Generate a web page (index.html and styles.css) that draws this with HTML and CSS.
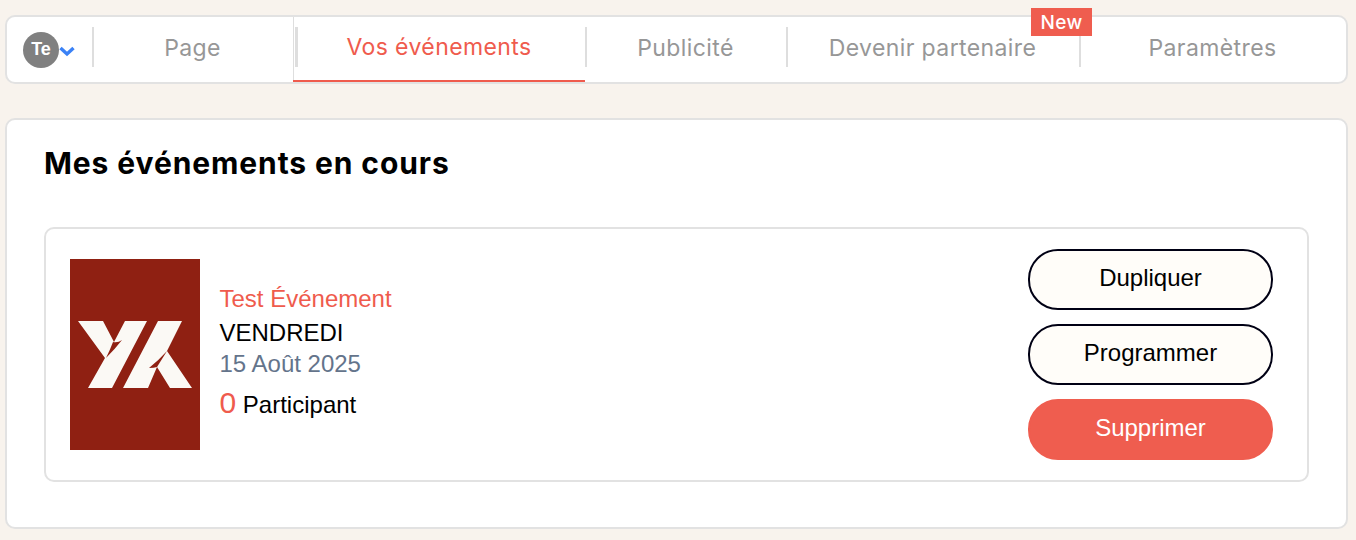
FILE: index.html
```html
<!DOCTYPE html>
<html lang="fr">
  <head>
    <meta charset="UTF-8" />
    <meta name="viewport" content="width=device-width, initial-scale=1.0" />
    <title>Vos événements</title>
    <link rel="stylesheet" href="styles.css">
  </head>
  <body>
    <nav class="tabs">
      <div class="account">
        <span class="avatar">Te</span>
        <svg class="chevron" width="18" height="12" viewBox="0 0 18 12">
          <path d="M2.5 3 L9 9 L15.5 3" fill="none" stroke="#3b82f6" stroke-width="3.4"/>
        </svg>
      </div>
      <a class="tab tab-page">Page</a>
      <a class="tab tab-events active">Vos événements</a>
      <a class="tab tab-pub">Publicité</a>
      <a class="tab tab-partner">Devenir partenaire<span class="badge">New</span></a>
      <a class="tab tab-settings">Paramètres</a>
    </nav>

    <section class="panel">
      <h1>Mes événements en cours</h1>
      <div class="event">
        <svg class="cover" width="130" height="191" viewBox="0 0 130 191">
          <rect width="130" height="191" fill="#8f2012"/>
          <path d="M8 62 H33 L44 83 L55 62 H77 L42 129 H18 L35 99 Z" fill="#fbf9f5"/>
          <path d="M43 83 Q48 84 52 81 Q45 90 36 99 Q40 91 43 83 Z" fill="#8f2012"/>
          <path d="M88 62 H112 L97 92 L122 129 H100 L87 108 L78 129 H53 Z" fill="#fbf9f5"/>
          <path d="M97 92 Q88 102 79 109 Q84 109 87 108 Z" fill="#8f2012"/>
        </svg>
        <div class="event-info">
          <div class="event-name">Test Événement</div>
          <div class="event-day">VENDREDI</div>
          <div class="event-date">15 Août 2025</div>
          <div class="event-count"><span class="count">0</span> Participant</div>
        </div>
        <div class="actions">
          <button class="btn" type="button">Dupliquer</button>
          <button class="btn" type="button">Programmer</button>
          <button class="btn btn-danger" type="button">Supprimer</button>
        </div>
      </div>
    </section>
  </body>
</html>
```

FILE: styles.css
```css
body {
  font-family: "Liberation Sans", Arial, sans-serif;
  margin: 0;
  padding: 15px 8px 10px 5px;
  background: #f8f3ed;
  color: #000;
}

.tabs {
  display: flex;
  height: 69px;
  box-sizing: border-box;
  background: #fff;
  border: 2px solid #e2e2e2;
  border-radius: 10px;
}

.account {
  display: flex;
  align-items: center;
  width: 85px;
  padding-left: 16px;
  box-sizing: border-box;
}

.avatar {
  width: 36px;
  height: 36px;
  border-radius: 50%;
  background: #808080;
  color: #fff;
  font-size: 18px;
  font-weight: bold;
  display: flex;
  align-items: center;
  justify-content: center;
  flex-shrink: 0;
}

.chevron {
  margin-top: 2px;
  margin-left: -1px;
}

.tab {
  position: relative;
  display: flex;
  align-items: center;
  justify-content: center;
  padding-bottom: 3px;
  color: #979797;
  font-family: Inter, sans-serif;
  font-size: 23px;
  letter-spacing: 0.4px;
  box-sizing: border-box;
}

/* short divider on the left of each tab */
.tab::before {
  content: "";
  position: absolute;
  left: 0;
  top: 10px;
  width: 2px;
  height: 40px;
  background: #dedede;
}

.tab-page { width: 201px; }
.tab-events { width: 292px; }
.tab-pub { width: 201px; }
.tab-partner { width: 293px; }
.tab-settings { flex: 1; }

.tab-events::before {
  left: 2px;
  width: 3px;
}

.tab-events::after {
  content: "";
  position: absolute;
  left: 0;
  top: 0;
  bottom: 0;
  width: 1px;
  background: #dedede;
}

.active {
  color: #ef5b4d;
  border-bottom: 2px solid #ef5b4d;
  padding-bottom: 4px;
}

.badge {
  position: absolute;
  z-index: 1;
  top: -9px;
  right: -13px;
  width: 61px;
  height: 28px;
  background: #ef5d4f;
  color: #fff;
  font-size: 19px;
  letter-spacing: 0.3px;
  font-weight: 500;
  display: flex;
  align-items: center;
  justify-content: center;
}

.panel {
  margin-top: 34px;
  height: 411px;
  box-sizing: border-box;
  padding: 24px 37px 0;
  background: #fff;
  border: 2px solid #e2e2e2;
  border-radius: 10px;
}

h1 {
  margin: 0 0 45px;
  font-family: Inter, sans-serif;
  font-size: 30px;
  font-weight: 700;
  letter-spacing: 0.9px;
  line-height: 38px;
}

.event {
  display: flex;
  align-items: center;
  height: 255px;
  box-sizing: border-box;
  padding: 0 34px 0 24px;
  border: 2px solid #e2e2e2;
  border-radius: 10px;
}

.cover {
  flex-shrink: 0;
}

.event-info {
  flex: 1;
  margin-left: 19.5px;
  padding-top: 2px;
  font-size: 24px;
}

.event-name {
  color: #ef5b4d;
  line-height: 34px;
}

.event-day {
  line-height: 33px;
}

.event-date {
  color: #64748b;
  line-height: 30px;
}

.event-count {
  line-height: 48px;
}

.count {
  color: #ef5b4d;
  font-size: 30px;
}

.actions {
  display: flex;
  flex-direction: column;
  gap: 14px;
}

.btn {
  width: 245px;
  height: 61px;
  padding: 0 0 3px;
  font-family: inherit;
  font-size: 24px;
  color: #000;
  background: #fffdf9;
  border: 2px solid #000014;
  border-radius: 30px;
}

.btn-danger {
  background: #ef5d4f;
  border-color: #ef5d4f;
  color: #fff;
}
```
